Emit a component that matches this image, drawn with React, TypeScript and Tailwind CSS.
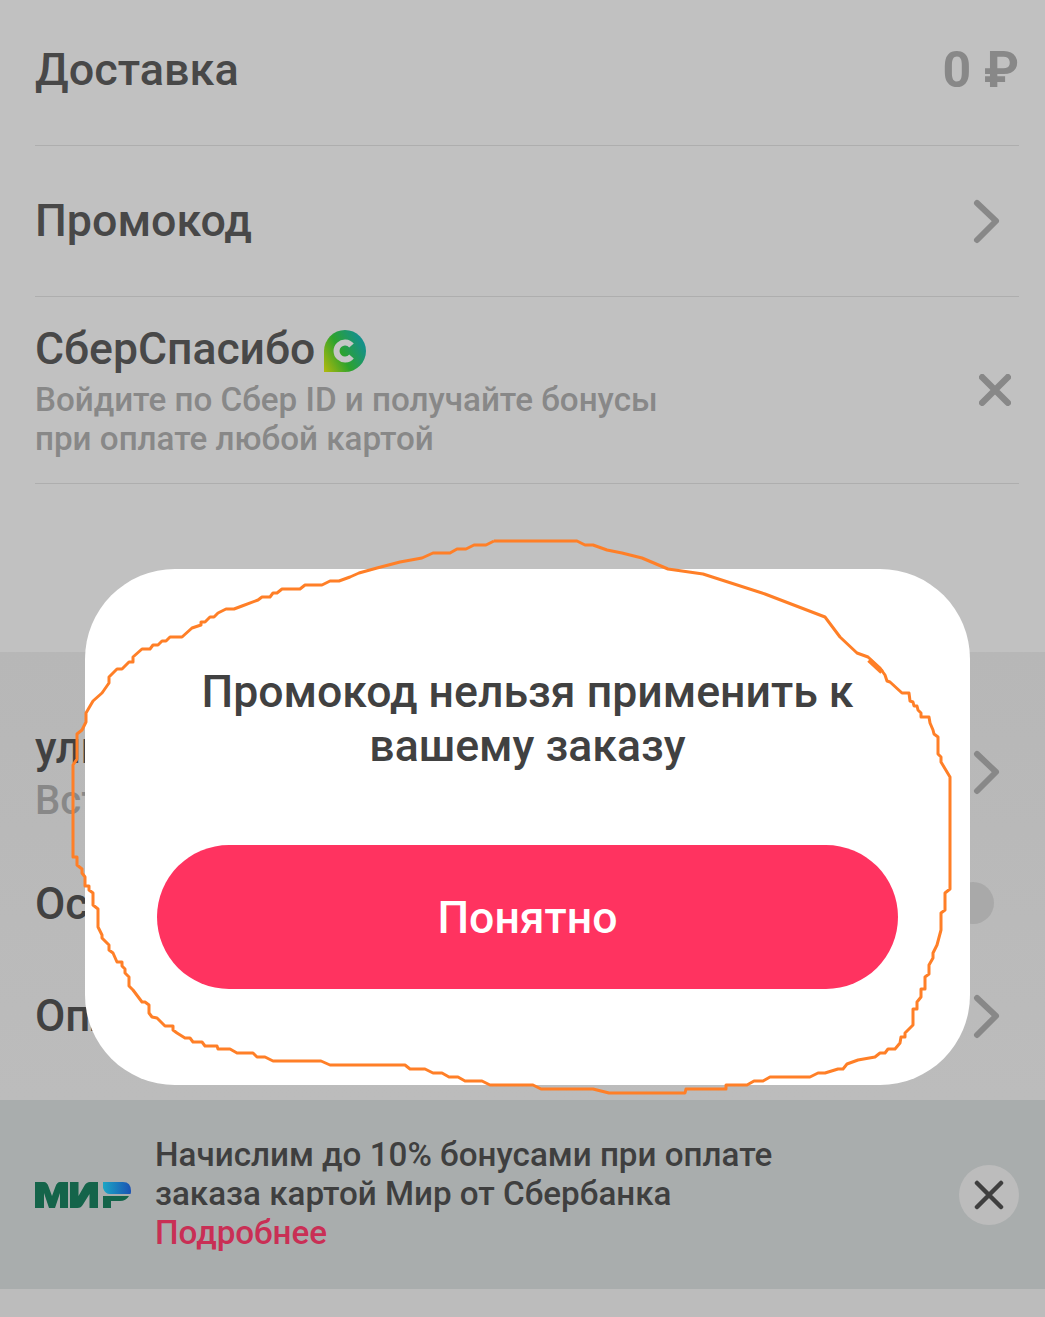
const font = "font-['Roboto',sans-serif]";

// контур, обведённый поверх скриншота
const outline =
    "494,541 577,541 585,545 593,545 607,550 622,553 642,558 668,569 703,574 765,594 825,617 840,637 857,653 868,657 880,668 885,675 887,681 890,682 902,693 909,693 910,701 913,702 914,706 917,706 918,710 921,713 921,717 929,717 930,723 933,730 934,734 938,737 938,754 941,757 941,762 950,777 950,889 945,893 945,910 941,913 941,930 937,945 933,953 933,958 929,965 929,974 925,977 925,989 921,989 921,997 917,1002 917,1009 913,1009 913,1025 905,1033 905,1037 901,1037 900,1043 895,1049 888,1049 885,1053 880,1053 875,1057 858,1060 847,1064 843,1069 838,1069 825,1073 818,1073 810,1077 770,1077 763,1081 754,1081 747,1085 726,1085 726,1089 686,1089 685,1093 609,1093 593,1089 541,1089 533,1085 490,1085 482,1081 465,1081 458,1077 449,1077 442,1073 433,1073 425,1069 410,1069 405,1065 330,1065 321,1061 273,1061 265,1057 257,1057 253,1053 237,1053 230,1049 218,1049 217,1046 205,1046 202,1042 193,1042 190,1038 185,1038 177,1033 173,1030 173,1026 165,1026 157,1018 152,1017 149,1013 149,1005 145,1002 142,1002 133,990 129,986 129,977 125,973 125,969 122,966 122,962 117,962 113,953 109,950 109,945 102,938 102,935 98,927 98,909 93,905 93,893 89,890 89,886 85,886 85,877 82,873 82,869 77,865 77,857 73,857 73,765 77,759 77,734 82,730 86,722 86,713 93,701 102,693 109,683 109,677 117,669 122,669 129,662 133,662 133,657 142,649 150,649 153,645 158,645 162,641 166,641 170,637 182,637 192,628 201,625 201,622 205,622 210,617 214,617 218,613 226,609 234,609 242,606 258,600 262,597 270,597 273,593 277,593 282,589 300,589 305,585 322,585 330,581 339,581 350,577 359,573 377,568 400,562 422,558 433,553 450,553 457,549 466,549 474,545 486,545 494,541";

function Chevron() {
    return (
        <svg width="30" height="48" viewBox="0 0 30 48" fill="none" className="shrink-0">
            <path d="M6 6 L25 24 L6 43" stroke="#888888" strokeWidth="6" strokeLinecap="round" strokeLinejoin="round" />
        </svg>
    );
}

function Cross({ size, width, color }: { size: number; width: number; color: string }) {
    return (
        <svg width={size} height={size} viewBox="0 0 30 30" fill="none" className="shrink-0">
            <path d="M3 3 L27 27 M27 3 L3 27" stroke={color} strokeWidth={width} strokeLinecap="round" />
        </svg>
    );
}

function SberIcon() {
    return (
        <svg width="42" height="42" viewBox="0 0 42 42" className="shrink-0 mt-[4px]">
            <defs>
                <linearGradient id="sber" x1="0" y1="1" x2="1" y2="0.45">
                    <stop offset="0" stopColor="#b3b90c" />
                    <stop offset="0.5" stopColor="#2ea32c" />
                    <stop offset="1" stopColor="#14908a" />
                </linearGradient>
            </defs>
            <path d="M0 42 L0 21 A21 21 0 1 1 21 42 Z" fill="url(#sber)" />
            <path d="M27.5 15.5 A8.5 8.5 0 1 0 27.5 26.5" fill="none" stroke="#c6c6c6" strokeWidth="6" />
        </svg>
    );
}

function MirLogo() {
    return (
        <svg width="96" height="26" viewBox="0 0 96 26" className="shrink-0">
            <defs>
                <linearGradient id="mir" x1="0" y1="0" x2="1" y2="0">
                    <stop offset="0" stopColor="#1aa6c4" />
                    <stop offset="1" stopColor="#1b52b4" />
                </linearGradient>
            </defs>
            <path d="M0 0 H9 Q12 0 13.5 4.5 L17 14 L20.5 4.5 Q22 0 25 0 H33 V26 H25 V11 L20 26 H14 L9 11 V26 H0 Z" fill="#14644a" />
            <path d="M35 0 H43.5 V14 L49.5 3.5 Q51.5 0 55 0 H63 V26 H54.5 V12 L48 22.5 Q46 26 42.5 26 H35 Z" fill="#14644a" />
            <path d="M68 0 H88 Q96 0 96 9 Q96 11 95.5 12 H75 Q70 12 68 6 Z" fill="url(#mir)" />
            <path d="M68 14 H94 Q91 19 85 19 H76 V26 H68 Z" fill="#14644a" />
        </svg>
    );
}

export default function App() {
    return (
        <div className={`${font} relative h-[1317px] w-[1045px] overflow-hidden bg-[#c1c1c1]`}>
            {/* верхняя часть */}
            <div className="h-[652px] pl-[35px] pr-[26px]">
                <div className="h-[146px] flex items-center justify-between border-b border-[#aeaeae]">
                    <span className="text-[45px] font-medium text-[#484848] -mt-[5px]">Доставка</span>
                    <span className="text-[50px] font-bold text-[#888888] -mt-[5px]">0 ₽</span>
                </div>
                <div className="h-[151px] flex items-center justify-between border-b border-[#aeaeae]">
                    <span className="text-[44.8px] font-medium text-[#484848]">Промокод</span>
                    <span className="pr-[18px]"><Chevron /></span>
                </div>
                <div className="h-[187px] flex items-center justify-between border-b border-[#aeaeae]">
                    <div className="flex flex-col mt-[1px]">
                        <div className="flex items-center gap-[9px] h-[52px] mb-[5px]">
                            <span className="text-[44.5px] font-medium text-[#484848]">СберСпасибо</span>
                            <SberIcon />
                        </div>
                        <span className="text-[33.2px] leading-[39px] font-medium text-[#888888]">Войдите по Сбер ID и получайте бонусы</span>
                        <span className="text-[33.2px] leading-[39px] font-medium text-[#888888]">при оплате любой картой</span>
                    </div>
                    <span className="pr-[8px]"><Cross size={32} width={6} color="#888888" /></span>
                </div>
            </div>

            {/* нижняя часть, почти целиком закрыта диалогом */}
            <div className="h-[448px] pl-[35px] pr-[26px] pt-[68px] bg-gradient-to-b from-[#b7b7b7] to-[#bcbcbc]">
                <div className="h-[108px] flex items-center justify-between">
                    <div className="flex flex-col">
                        <span className="text-[44px] leading-[54px] font-medium text-[#414141]">улица</span>
                        <span className="text-[40px] leading-[52px] font-medium text-[#888888]">Вставка</span>
                    </div>
                    <span className="pr-[18px] -mt-[4px]"><Chevron /></span>
                </div>
                <div className="h-[112px] mt-[20px] flex items-center justify-between">
                    <span className="text-[44px] font-medium text-[#414141]">Оставить</span>
                    <span className="size-[42px] rounded-full bg-[#a9a9a9] mr-[25px] -mt-[2px]" />
                </div>
                <div className="h-[112px] flex items-center justify-between">
                    <span className="text-[44px] font-medium text-[#414141]">Оплата</span>
                    <span className="pr-[18px]"><Chevron /></span>
                </div>
            </div>

            {/* баннер */}
            <div className="h-[189px] bg-[#a9adad] flex items-center pl-[35px] pr-[26px]">
                <MirLogo />
                <div className="ml-[24px] -mt-[2px] flex-1 flex flex-col text-[33.2px] leading-[39px] font-medium text-[#3f3f3f] whitespace-nowrap">
                    <span>Начислим до 10% бонусами при оплате</span>
                    <span>заказа картой Мир от Сбербанка</span>
                    <span className="text-[#c92f55]">Подробнее</span>
                </div>
                <button className="size-[60px] rounded-full bg-[#bcbcbc] flex items-center justify-center">
                    <Cross size={30} width={4.5} color="#3f3f3f" />
                </button>
            </div>
            <div className="h-[28px] bg-[#bcbcbc]" />

            {/* диалог */}
            <div className="absolute left-[85px] top-[569px] w-[885px] h-[516px] rounded-[90px] bg-white flex flex-col items-center pt-[96px]">
                <div className="w-[680px] text-center text-[44.6px] leading-[54px] font-medium text-[#414141]">
                    Промокод нельзя применить к вашему заказу
                </div>
                <button className="mt-[72px] w-[741px] h-[144px] rounded-full bg-[#ff3360] text-white text-[44.6px] font-medium pt-[2px]">
                    Понятно
                </button>
            </div>

            {/* оранжевая обводка от руки */}
            <svg className="absolute inset-0 pointer-events-none" width="1045" height="1317" viewBox="0 0 1045 1317" fill="none">
                <polyline points={outline} stroke="#ff7f27" strokeWidth="3" strokeLinejoin="round" />
                <path d="M869 660 L882 672" stroke="#ff7f27" strokeWidth="5" />
            </svg>
        </div>
    );
}
